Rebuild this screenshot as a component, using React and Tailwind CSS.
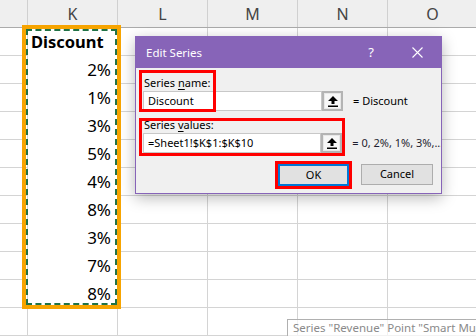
import React from "react";

const colW = ["w-[28px]", "w-[90px]", "w-[90px]", "w-[90px]", "w-[90px]", "w-[90px]"];
const headers = ["", "K", "L", "M", "N", "O"];
const values = ["Discount", "2%", "1%", "3%", "5%", "4%", "8%", "3%", "7%", "8%", ""];

function UpIcon() {
  return (
    <svg width="10" height="11" viewBox="0 0 10 11">
      <path d="M0 5 L5 0 L10 5 L6.5 5 L6.5 8 L3.5 8 L3.5 5 Z" fill="#000" />
      <rect x="0" y="9.5" width="10" height="1.5" fill="#000" />
    </svg>
  );
}

function RefButton() {
  return (
    <div className="w-[21px] h-[20px] border-2 border-[#b4b4b4] bg-[#e8e8e8] flex items-center justify-center">
      <div className="w-[15px] h-[14px] bg-[#f7f7f7] flex items-center justify-center">
        <UpIcon />
      </div>
    </div>
  );
}

export default function App() {
  return (
    <div
      className="relative w-[476px] h-[336px] overflow-hidden bg-white"
      style={{ fontFamily: '"Noto Sans", "Open Sans", sans-serif' }}
    >
      {/* header */}
      <div className="flex h-[28px] bg-[#efefef] border-b border-[#ababab]">
        {headers.map((h, i) => (
          <div
            key={i}
            className={`${colW[i]} shrink-0 h-full flex items-center justify-center border-r border-[#d0d0d0] text-[16px] text-[#444]`}
          >
            {h}
          </div>
        ))}
      </div>
      {/* rows */}
      {values.map((v, r) => (
        <div key={r} className="flex h-[28px]">
          {headers.map((_, c) => {
            if (c === 1) {
              return (
                <div
                  key={c}
                  className={`${colW[c]} shrink-0 h-full border-r border-[#d4d4d4] ${
                    r < 10 ? "border-b border-b-white" : "border-b border-[#d4d4d4]"
                  } flex items-center ${r === 0 ? "justify-start pl-[3px] pt-[2px]" : "justify-end pr-[6px]"} text-black`}
                >
                  {r === 0 ? (
                    <span className="text-[16.5px] font-bold">{v}</span>
                  ) : (
                    <span className="text-[17px]">{v}</span>
                  )}
                </div>
              );
            }
            return (
              <div
                key={c}
                className={`${colW[c]} shrink-0 h-full border-r border-b border-[#d4d4d4]`}
              />
            );
          })}
        </div>
      ))}

      {/* selection overlay: orange + marching ants */}
      <div className="absolute left-[22px] top-[25px] w-[99px] h-[284px] border-4 border-[#f7a400] pointer-events-none">
        <div className="w-full h-full border-2 border-dashed border-[#217346]" />
      </div>

      {/* dialog */}
      <div className="absolute left-[135px] top-[36px] w-[307px] h-[158px] border border-[#8764b8] bg-[#f0f0f0] shadow-[0_4px_14px_rgba(0,0,0,0.28)] flex flex-col">
        <div className="h-[31px] bg-[#8764b8] flex items-center pl-[10px] pr-[18px] text-white">
          <span className="text-[11.5px] flex-1">Edit Series</span>
          <span className="text-[13px] mr-[38px]">?</span>
          <svg width="11" height="11" viewBox="0 0 11 11">
            <path d="M0.5 0.5 L10.5 10.5 M10.5 0.5 L0.5 10.5" stroke="#fff" strokeWidth="1.1" />
          </svg>
        </div>
        <div className="flex flex-col pl-[7px] text-[11px] text-black">
          <div className="h-[14px] mt-[8px] pl-[1px] leading-[14px]">
            Series <span className="underline underline-offset-2">n</span>ame:
          </div>
          <div className="flex items-center mt-[1px]">
            <div className="w-[179px] h-[20px] bg-white border border-[#c8c8c8] pl-[4px] flex items-center">
              Discount
            </div>
            <RefButton />
            <span className="ml-[10px]">= Discount</span>
          </div>
          <div className="h-[14px] mt-[7px] pl-[1px] leading-[14px]">
            Series <span className="underline underline-offset-2">v</span>alues:
          </div>
          <div className="flex items-center mt-[1px]">
            <div className="w-[179px] h-[20px] bg-white border border-[#c8c8c8] pl-[4px] flex items-center">
              =Sheet1!$K$1:$K$10
            </div>
            <RefButton />
            <span className="ml-[10px] whitespace-nowrap overflow-hidden w-[89px] text-[#1f1f2f]">
              = 0, 2%, 1%, 3%,...
            </span>
          </div>
          <div className="flex mt-[11px] pl-[135px]">
            <div className="w-[71px] h-[22px] border-2 border-[#0078d7] bg-[#e1e1e1] flex items-center justify-center">
              OK
            </div>
            <div className="w-[72px] h-[21px] ml-[12px] border border-[#adadad] bg-[#e1e1e1] flex items-center justify-center">
              Cancel
            </div>
          </div>
        </div>
      </div>

      {/* red annotation boxes */}
      <div className="absolute left-[139px] top-[70px] w-[77px] h-[42px] border-[3px] border-[#ff0000] pointer-events-none" />
      <div className="absolute left-[139px] top-[118px] w-[206px] h-[38px] border-[3px] border-[#ff0000] pointer-events-none" />
      <div className="absolute left-[275px] top-[161px] w-[77px] h-[28px] border-[3px] border-[#ff0000] pointer-events-none" />

      {/* tooltip */}
      <div className="absolute left-[287px] top-[319px] w-[200px] h-[20px] border border-[#b0b0b0] bg-white/70 pl-[5px] text-[11.5px] text-[#8a8a8a] whitespace-nowrap leading-[16px]">
        Series "Revenue" Point "Smart Mug"
      </div>
    </div>
  );
}
